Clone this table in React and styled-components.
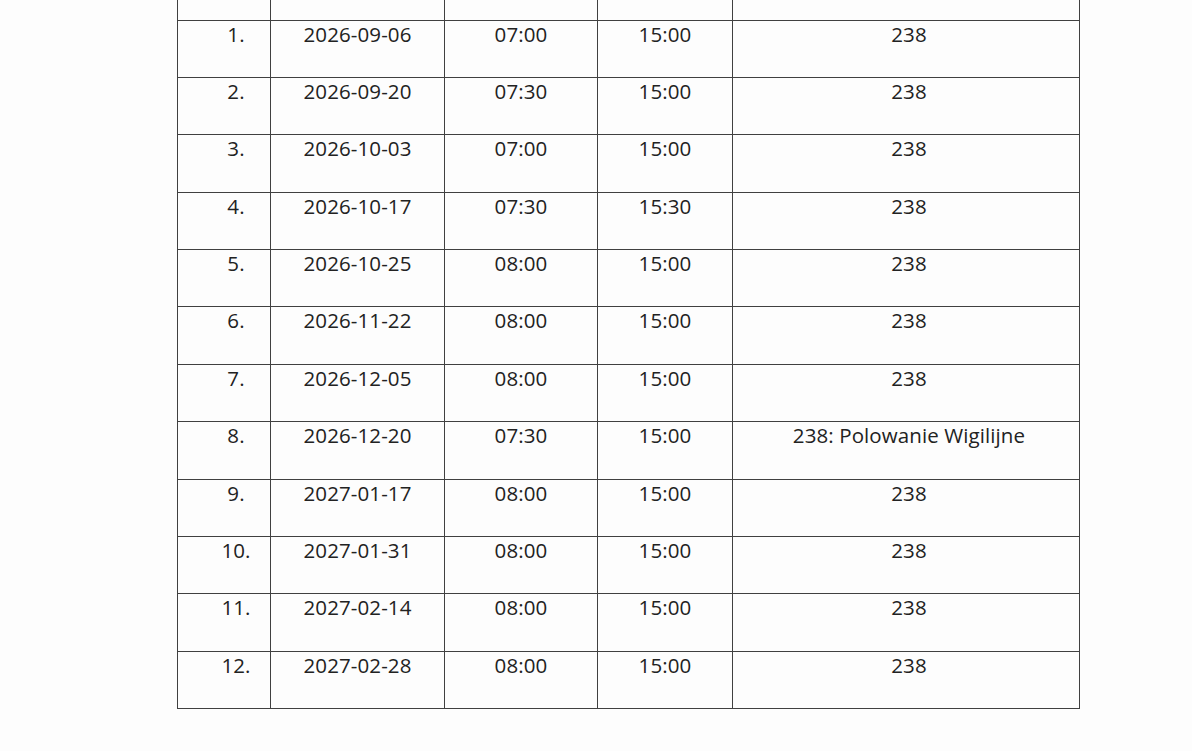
import React from 'react'
import styled, { createGlobalStyle } from 'styled-components'

const GlobalStyle = createGlobalStyle`
  html, body {
    margin: 0;
    padding: 0;
    background: #fdfdfd;
  }
`

const Page = styled.div`
  width: 1192px;
  height: 751px;
  overflow: hidden;
  padding-left: 177px;
  box-sizing: border-box;
  font-family: "Open Sans", "Liberation Sans", sans-serif;
  color: #222;
`

const Table = styled.table`
  border-collapse: collapse;
  table-layout: fixed;
  width: 902px;
`

const Row = styled.tr`
  height: ${p => (p.$stub ? '20px' : '57.4px')};
`

const Cell = styled.td`
  border: 1.5px solid #404040;
  border-top: ${p => (p.$stub ? 'none' : '1.5px solid #404040')};
  padding: 1px 0 0 ${p => p.$pad || 0}px;
  vertical-align: top;
  text-align: center;
  font-size: 20.5px;
  line-height: 24px;
  letter-spacing: 0.1px;
  box-sizing: border-box;
`

const COLS = [93, 174, 153, 135, 347]

const ROWS = [
  ['1.', '2026-09-06', '07:00', '15:00', '238'],
  ['2.', '2026-09-20', '07:30', '15:00', '238'],
  ['3.', '2026-10-03', '07:00', '15:00', '238'],
  ['4.', '2026-10-17', '07:30', '15:30', '238'],
  ['5.', '2026-10-25', '08:00', '15:00', '238'],
  ['6.', '2026-11-22', '08:00', '15:00', '238'],
  ['7.', '2026-12-05', '08:00', '15:00', '238'],
  ['8.', '2026-12-20', '07:30', '15:00', '238: Polowanie Wigilijne'],
  ['9.', '2027-01-17', '08:00', '15:00', '238'],
  ['10.', '2027-01-31', '08:00', '15:00', '238'],
  ['11.', '2027-02-14', '08:00', '15:00', '238'],
  ['12.', '2027-02-28', '08:00', '15:00', '238'],
]

export default function App() {
  return (
    <Page>
      <GlobalStyle />
      <Table>
        <colgroup>
          {COLS.map((w, i) => (
            <col key={i} style={{ width: w }} />
          ))}
        </colgroup>
        <tbody>
          <Row $stub>
            {COLS.map((_, i) => (
              <Cell key={i} $stub />
            ))}
          </Row>
          {ROWS.map(row => (
            <Row key={row[0]}>
              {row.map((text, i) => (
                <Cell key={i} $pad={i === 0 ? 24 : i === 4 ? 6 : 0}>
                  {text}
                </Cell>
              ))}
            </Row>
          ))}
        </tbody>
      </Table>
    </Page>
  )
}
